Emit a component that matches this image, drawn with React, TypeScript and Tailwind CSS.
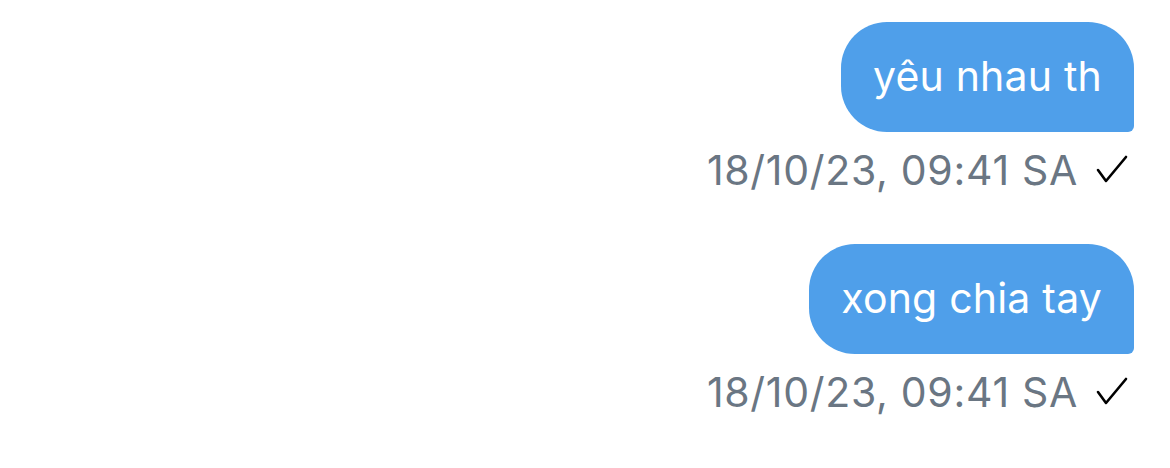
const messages = [
  { id: 1, text: 'yêu nhau th', time: '18/10/23, 09:41 SA' },
  { id: 2, text: 'xong chia tay', time: '18/10/23, 09:41 SA' },
];

const Tick = () => (
  <svg width="32" height="30" viewBox="0 0 32 30" className="mr-[6px]">
    <path d="M2 15 L10 26 L30 2" fill="none" stroke="#000" strokeWidth="2.6" strokeLinecap="round" strokeLinejoin="round" />
  </svg>
);

export default function App() {
  return (
    <div className="w-[1170px] h-[468px] bg-white pt-[22px] pr-[36px] flex flex-col items-end gap-[50px] font-['Inter',sans-serif]">
      {messages.map((m) => (
        <div key={m.id} className="flex flex-col items-end">
          <div className="h-[110px] flex items-center px-[32px] bg-[#4f9fea] text-white text-[41px] tracking-[0.2px] rounded-[46px] rounded-br-[6px]">
            {m.text}
          </div>
          <div className="mt-[14px] flex items-center gap-[18px] text-[41px] tracking-[0.7px] text-[#6a7683] leading-[48px]">
            <span>{m.time}</span>
            <Tick />
          </div>
        </div>
      ))}
    </div>
  );
}
